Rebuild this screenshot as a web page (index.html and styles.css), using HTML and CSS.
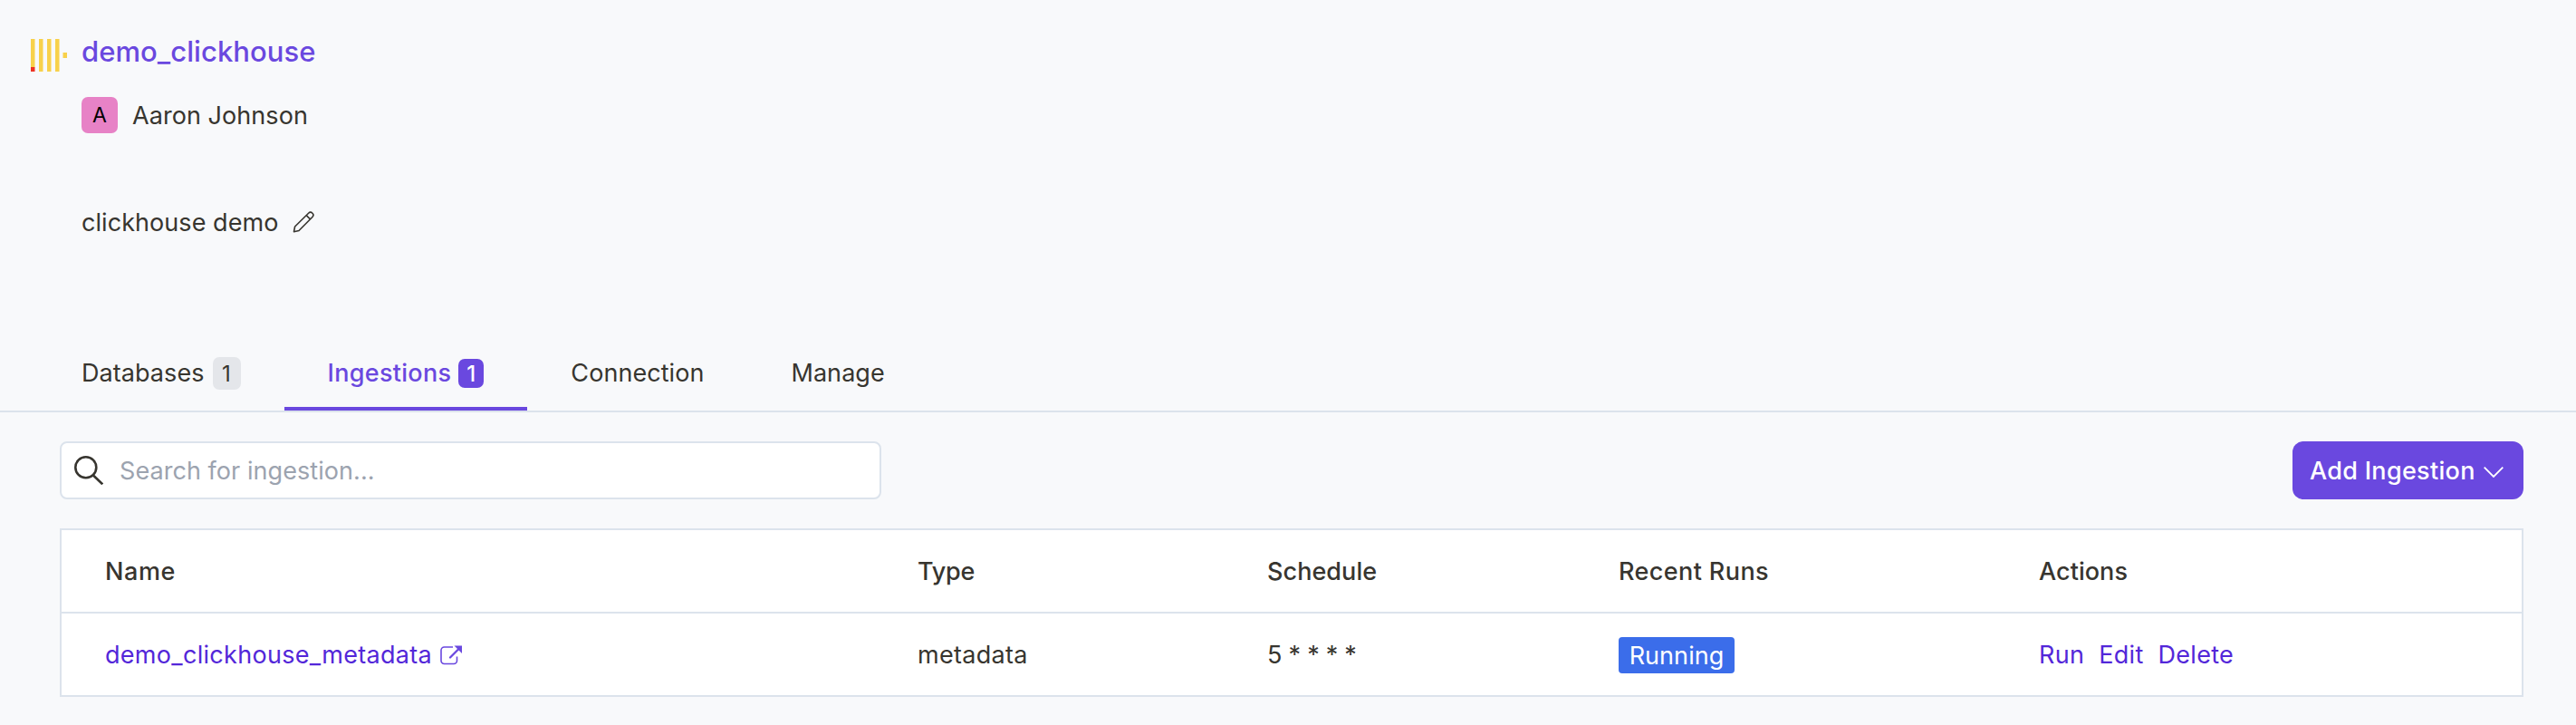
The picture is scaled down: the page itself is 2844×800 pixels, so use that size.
FILE: index.html
```html
<!DOCTYPE html>
<html lang="en">
<head>
<meta charset="utf-8">
<title>demo_clickhouse</title>
<link rel="stylesheet" href="styles.css">
</head>
<body>
<header class="source">
  <svg class="source-logo" viewBox="0 0 40 36" width="40" height="36">
    <path fill="#f8d14b" d="M0 0h4.500v31H0zM9 0h4.500v36H9zM18 0h4.500v36H18zM27 0h4.500v36H27zM35.500 15H40v6h-4.500z"/>
    <path fill="#ee3324" d="M0 31h4.500v5H0z"/>
  </svg>
  <div class="source-info">
    <h1 class="source-title">demo_clickhouse</h1>
    <div class="owner"><span class="avatar">A</span><span class="owner-name">Aaron Johnson</span></div>
    <div class="description">
      <span>clickhouse demo</span>
      <svg viewBox="0 0 24 24" width="24" height="24" fill="none" stroke="#37352f" stroke-width="1.600" stroke-linejoin="round"><path d="M1.500 22.700 2.600 17 17.600 2.200a3 3 0 0 1 4.300 4.300L7 21.500zM15.200 4.600l4.300 4.300"/></svg>
    </div>
  </div>
</header>
<nav class="tabs">
  <a class="tab">Databases<span class="count">1</span></a>
  <a class="tab tab-active">Ingestions<span class="count count-active">1</span></a>
  <a class="tab">Connection</a>
  <a class="tab">Manage</a>
</nav>
<main class="content">
  <div class="toolbar">
    <label class="search">
      <svg viewBox="0 0 32 32" width="32" height="32" fill="none" stroke="#37352f" stroke-width="2.600"><circle cx="12.800" cy="12.800" r="11.500"/><path d="M20.700 21.300 31.200 31.300"/></svg>
      <span class="placeholder">Search for ingestion...</span>
    </label>
    <button class="add"><span class="add-label">Add Ingestion</span>
      <svg viewBox="0 0 22 12" width="22" height="12" fill="none" stroke="#fff" stroke-width="1.800"><path d="M.7.700 11 11 21.300.700"/></svg>
    </button>
  </div>
  <div class="table">
    <div class="row head"><span class="head-name">Name</span><span class="head-type">Type</span><span>Schedule</span><span class="head-runs">Recent Runs</span><span>Actions</span></div>
    <div class="row">
      <span class="cell-name"><a class="link">demo_clickhouse_metadata</a>
        <svg viewBox="0 0 24 22" width="24" height="22" fill="none" stroke="#6a48df"><path stroke-width="1.600" d="M14 2H4.500A3.500 3.500 0 0 0 1 5.500V17a3.500 3.500 0 0 0 3.500 3.500H15a3.500 3.500 0 0 0 3.500-3.500v-4.500"/><path stroke-width="2.300" stroke-linecap="round" d="M11 13.500 20 4.500"/><path fill="#6a48df" stroke="none" d="M15.500.500H24V9z"/></svg>
      </span>
      <span class="cell-type">metadata</span>
      <span class="cell-cron">5 * * * *</span>
      <span><span class="status">Running</span></span>
      <span class="actions"><a class="link">Run</a><a class="link">Edit</a><a class="link">Delete</a></span>
    </div>
  </div>
</main>
</body>
</html>
```

FILE: styles.css
```css
* {
  box-sizing: border-box;
}

body {
  margin: 0;
  background: #f8f9fb;
  color: #37352f;
  font: 27px/40px Inter, "Liberation Sans", sans-serif;
  letter-spacing: 0.06px;
}

svg {
  display: block;
  flex: none;
}

.source {
  display: flex;
  gap: 16px;
  padding: 36px 0 0 34px;
}

.source-logo {
  margin-top: 7px;
}

.source-title {
  margin: 0 0 30px;
  font-size: 31px;
  line-height: 41px;
  font-weight: 500;
  color: #6a48df;
}

.owner {
  display: flex;
  align-items: center;
  gap: 16px;
  height: 40px;
}

.owner-name {
  padding-top: 2px;
}

.avatar {
  width: 40px;
  height: 40px;
  border-radius: 7px;
  background: #e782c6;
  color: #000;
  font-size: 23px;
  line-height: 41px;
  text-align: center;
}

.description {
  display: flex;
  align-items: center;
  gap: 16px;
  margin-top: 79px;
}

.description svg {
  margin-bottom: 2px;
}

.tabs {
  display: flex;
  margin-top: 104px;
  padding-left: 42px;
  border-bottom: 2px solid #dce3ec;
}

.tab {
  display: flex;
  align-items: center;
  height: 83px;
  padding: 5px 48px 0;
  border-bottom: 4px solid transparent;
}

.tab-active {
  color: #6a48df;
  font-weight: 500;
  letter-spacing: 0.3px;
  border-bottom-color: #6a48df;
}

.count {
  width: 31px;
  height: 36px;
  margin-left: 9px;
  border-radius: 7px;
  background: #e4e6ea;
  font-size: 24px;
  line-height: 37px;
  text-align: center;
}

.count-active {
  width: 28px;
  height: 32px;
  margin-left: 8px;
  background: #6a48df;
  color: #fff;
  line-height: 33px;
}

.content {
  padding: 32px 58px 0 66px;
}

.toolbar {
  display: flex;
  justify-content: space-between;
}

.search {
  display: flex;
  align-items: center;
  gap: 18px;
  width: 907px;
  height: 64px;
  padding-left: 14px;
  border: 2px solid #dce3ec;
  border-radius: 8px;
  background: #fff;
}

.placeholder {
  padding-top: 1px;
  color: #9ca3af;
}

.add {
  display: flex;
  align-items: center;
  gap: 9px;
  width: 255px;
  height: 64px;
  padding: 0 0 0 19px;
  border: 0;
  border-radius: 12px;
  background: #6a48df;
  color: #fff;
  font: inherit;
  font-weight: 500;
  letter-spacing: 0.3px;
}

.add-label {
  padding-top: 1px;
}

.add svg {
  margin-top: 4px;
}

.table {
  margin-top: 32px;
  border: 2px solid #dce3ec;
  background: #fff;
}

.row {
  display: grid;
  grid-template-columns: 897px 386px 388px 464px 1fr;
  align-items: center;
  height: 90px;
  padding: 1px 0 0 48px;
}

.row + .row {
  height: 92px;
  border-top: 2px solid #dce3ec;
}

.head {
  font-weight: 500;
}

.head-name {
  letter-spacing: 0.6px;
}

.head-type {
  letter-spacing: -0.2px;
}

.head-runs {
  letter-spacing: 0.4px;
}

.cell-name {
  display: flex;
  align-items: center;
  gap: 9px;
}

.link {
  color: #5327d9;
  letter-spacing: 0.3px;
}

.cell-type {
  letter-spacing: 0.3px;
}

.cell-cron {
  letter-spacing: -0.25px;
}

.status {
  display: block;
  width: 128px;
  height: 40px;
  border-radius: 4px;
  background: #3b6dea;
  color: #fff;
  line-height: 41px;
  text-align: center;
}

.actions {
  display: flex;
  gap: 16px;
}
```
